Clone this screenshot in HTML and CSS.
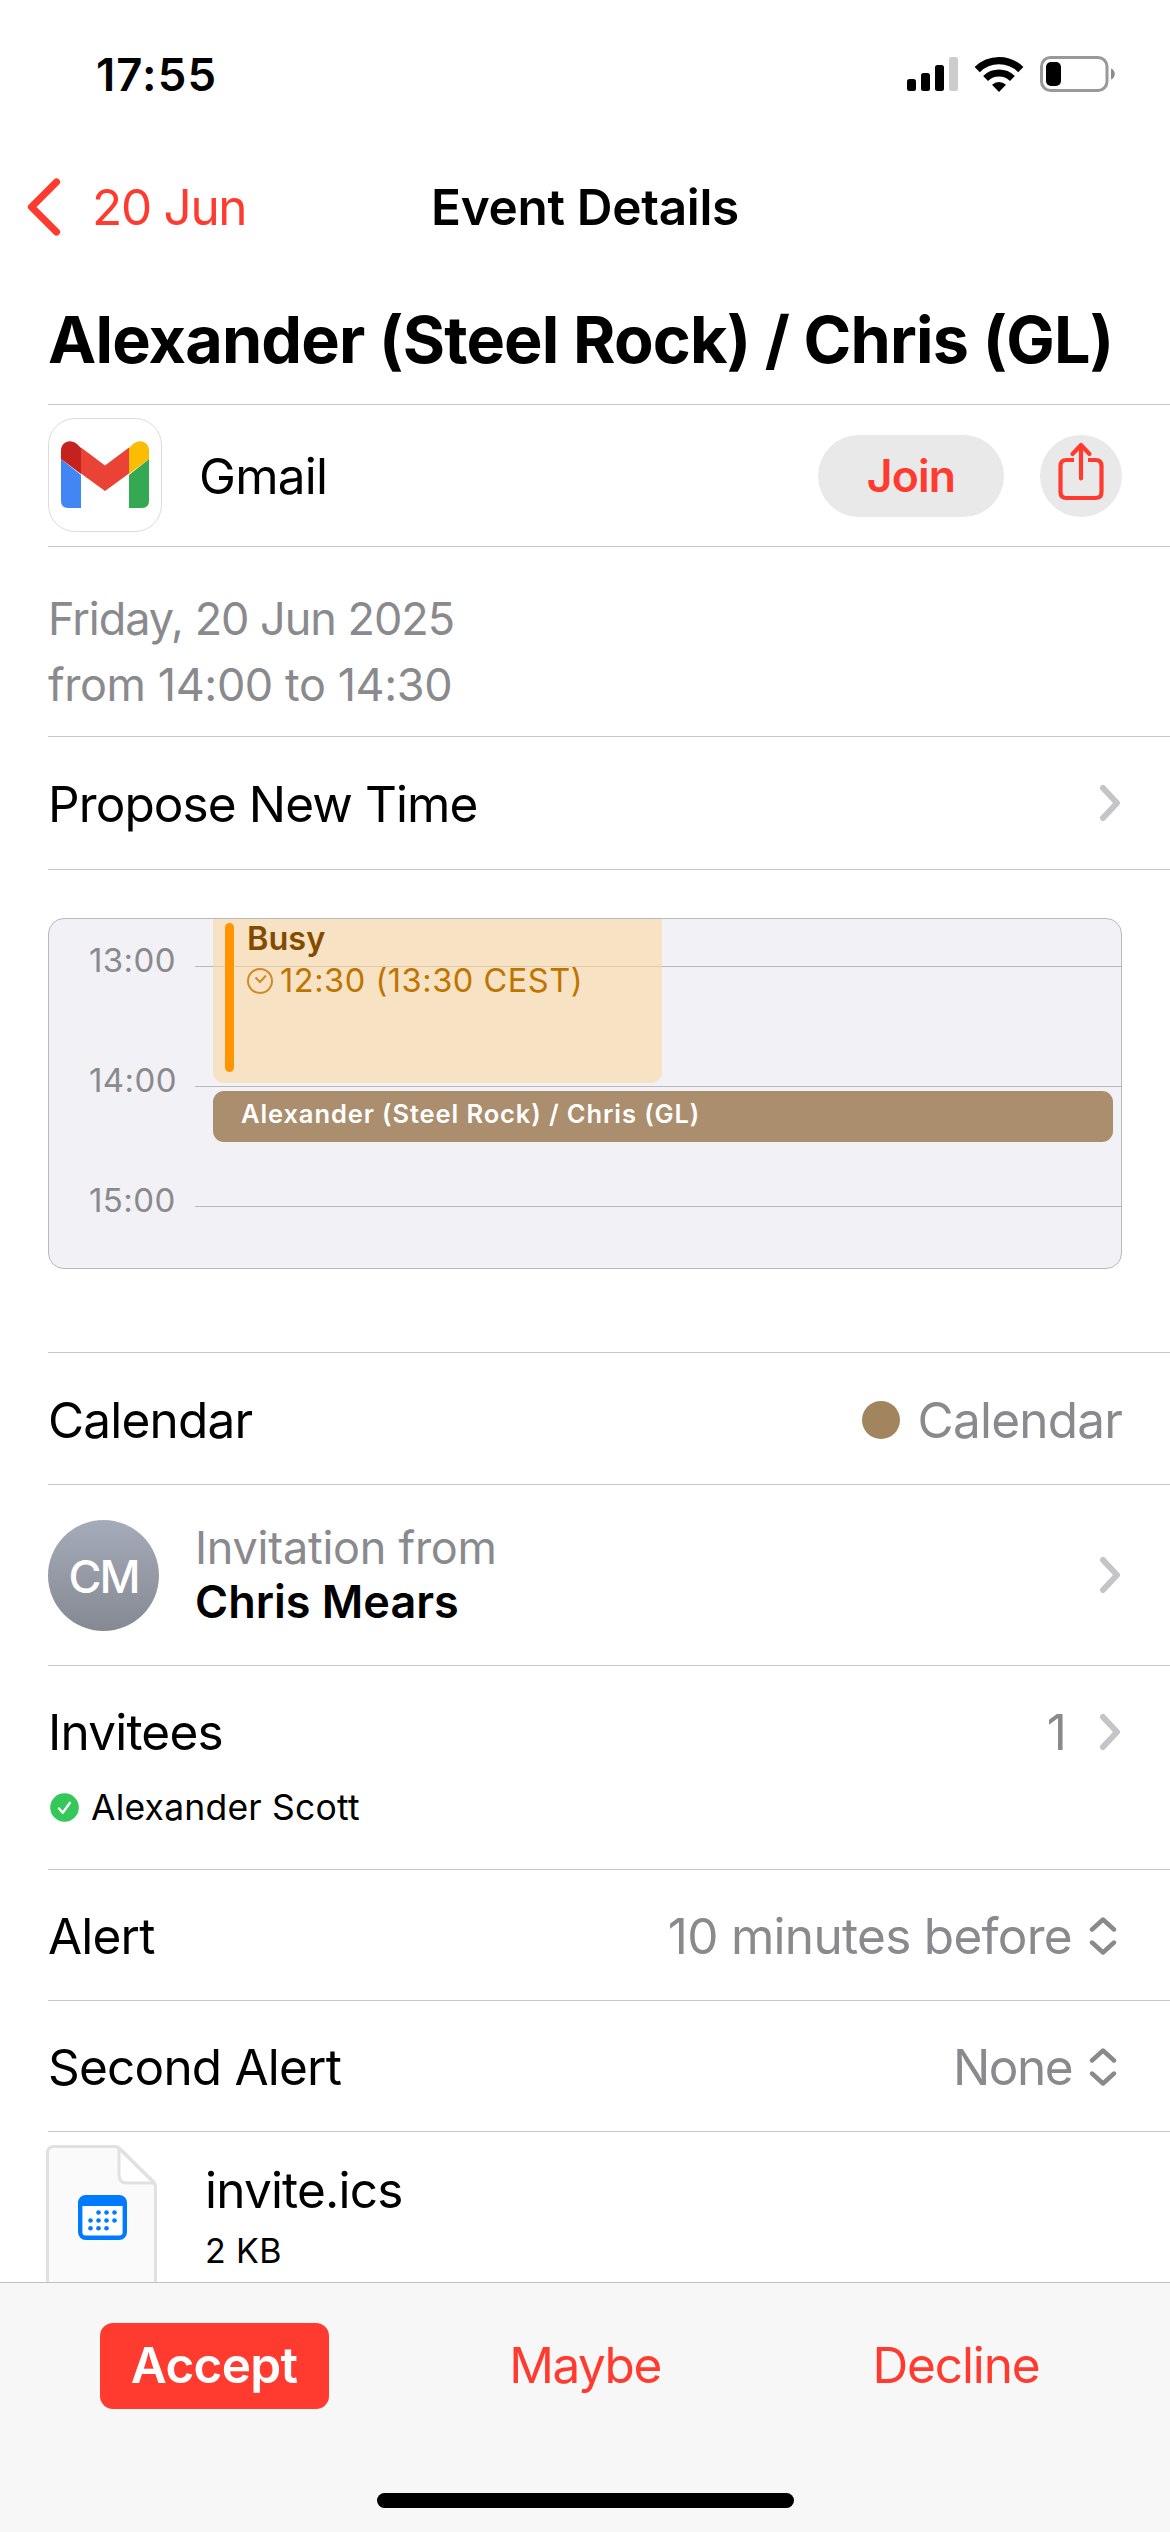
FILE: index.html
```html
<!DOCTYPE html>
<html lang="en">
<head>
<meta charset="utf-8">
<title>Event Details</title>
<link rel="stylesheet" href="styles.css">
</head>
<body>
<div class="screen">
  <header class="status">
    <span class="status-time">17:55</span>
    <div class="status-icons">
      <svg class="signal" width="52" height="36" viewBox="0 0 52 36">
        <rect x="0" y="23" width="9" height="12" rx="2.5"/>
        <rect x="14" y="17" width="9" height="18" rx="2.5"/>
        <rect x="28" y="9" width="9" height="26" rx="2.5"/>
        <rect x="42" y="1" width="9" height="34" rx="2.5" fill="#ccc"/>
      </svg>
      <svg class="wifi" width="50" height="36" viewBox="0 0 50 36">
        <path d="M3.2 13.6a31 31 0 0 1 43.6 0" fill="none" stroke="#000" stroke-width="7.4"/>
        <path d="M11.6 22.4a19.2 19.2 0 0 1 26.8 0" fill="none" stroke="#000" stroke-width="7"/>
        <path d="M25 36l-7-7.2a10 10 0 0 1 14 0z"/>
      </svg>
      <svg class="battery" width="76" height="36" viewBox="0 0 76 36">
        <rect x="1.5" y="1.5" width="65.500" height="33" rx="9" fill="none" stroke="#999" stroke-width="3"/>
        <rect x="6" y="6" width="15" height="24" rx="5"/>
        <path d="M71 12.500c5 1.500 5 9.500 0 11z" fill="#8c8c8c"/>
      </svg>
    </div>
  </header>

  <nav class="nav">
    <a class="back">
      <svg width="34" height="58" viewBox="0 0 34 58"><path d="M29.500 4 4.500 29l25 25" fill="none" stroke="#ff3b30" stroke-width="7.200" stroke-linecap="round" stroke-linejoin="round"/></svg>
      <span>20 Jun</span>
    </a>
    <h1 class="nav-title">Event Details</h1>
  </nav>

  <main class="details">
    <section class="row row-title"><h2 class="title">Alexander (Steel Rock) / Chris (GL)</h2></section>

    <section class="row row-app">
      <div class="app-icon">
        <svg width="88" height="67" viewBox="0 0 88 67">
          <path d="M0 18l20 16v33H7q-7 0-7-7z" fill="#4285f4"/>
          <path d="M88 18L68 34v33h13q7 0 7-7z" fill="#34a853"/>
          <path d="M20 7v26L0 18V9.500C0 1 9-3 16 3z" fill="#c5221f"/>
          <path d="M68 7v26l20-15V9.500C88 1 79-3 72 3z" fill="#fbbc04"/>
          <path d="M20 6.500l24 18 24-18v26L44 50 20 32.500z" fill="#ea4335"/>
        </svg>
      </div>
      <span class="app-name">Gmail</span>
      <button class="join">Join</button>
      <button class="share">
        <svg width="46" height="60" viewBox="0 0 46 60" fill="none" stroke="#ff3b30" stroke-width="4.200" stroke-linecap="round" stroke-linejoin="round">
          <path d="M16 19H8.500Q2.500 19 2.500 25v26q0 6 6 6h29q6 0 6-6V25q0-6-6-6H30" stroke-linecap="butt"/>
          <path d="M23 37.500V4.500M14.500 13 23 4l8.500 9"/>
        </svg>
      </button>
    </section>

    <section class="row row-date">
      <p class="date-line date-day">Friday, 20 Jun 2025</p>
      <p class="date-line date-time">from 14:00 to 14:30</p>
    </section>

    <section class="row row-propose">
      <span class="propose">Propose New Time</span>
      <svg class="chevron" width="22" height="38" viewBox="0 0 22 38"><path d="M4 4l14 15L4 34"/></svg>
    </section>

    <section class="row row-timeline">
      <div class="timeline">
        <div class="hour"><span class="hour-label">13:00</span><i class="hour-line"></i></div>
        <div class="hour"><span class="hour-label">14:00</span><i class="hour-line"></i></div>
        <div class="hour"><span class="hour-label">15:00</span><i class="hour-line"></i></div>
        <div class="event event-busy">
          <i class="event-bar"></i>
          <div class="event-body">
            <b class="busy">Busy</b>
            <span class="busy-time">
              <svg width="26" height="26" viewBox="0 0 26 26" fill="none" stroke="#d08a28" stroke-width="2"><circle cx="13" cy="13" r="12"/><path d="M8.500 9.500 13 14l6-6.500"/></svg>
              <span>12:30 (13:30 CEST)</span>
            </span>
          </div>
        </div>
        <div class="event event-main">Alexander (Steel Rock) / Chris (GL)</div>
      </div>
    </section>

    <section class="row row-calendar">
      <span class="calendar-label">Calendar</span>
      <span class="value"><i class="dot"></i><span class="calendar-label">Calendar</span></span>
    </section>

    <section class="row row-organizer">
      <div class="avatar">CM</div>
      <div class="organizer">
        <span class="muted invitation">Invitation from</span>
        <b class="organizer-name">Chris Mears</b>
      </div>
      <svg class="chevron" width="22" height="38" viewBox="0 0 22 38"><path d="M4 4l14 15L4 34"/></svg>
    </section>

    <section class="row row-invitees">
      <div class="line">
        <span class="invitees">Invitees</span>
        <span class="value count">1</span>
        <svg class="chevron" width="22" height="38" viewBox="0 0 22 38"><path d="M4 4l14 15L4 34"/></svg>
      </div>
      <div class="invitee">
        <svg class="accepted" width="29" height="29" viewBox="0 0 29 29"><circle cx="14.500" cy="14.500" r="14.300" fill="#34c759"/><path d="M9 15.500l3.700 4.300L20 9.800" fill="none" stroke="#fff" stroke-width="2.400" stroke-linecap="round" stroke-linejoin="round"/></svg>
        <span class="invitee-name">Alexander Scott</span>
      </div>
    </section>

    <section class="row row-alert">
      <span class="alert-label">Alert</span>
      <span class="value minutes">10 minutes before</span>
      <svg class="updown" width="28" height="40" viewBox="0 0 28 40"><path d="M3 13.500 14 3.500l11 10M3 26.500l11 10 11-10"/></svg>
    </section>

    <section class="row row-alert">
      <span class="alert-label">Second Alert</span>
      <span class="value none">None</span>
      <svg class="updown" width="28" height="40" viewBox="0 0 28 40"><path d="M3 13.500 14 3.500l11 10M3 26.500l11 10 11-10"/></svg>
    </section>

    <section class="row-file">
      <svg class="file-icon" width="112" height="150" viewBox="0 0 112 150">
        <path d="M1.500 150V8q0-6.500 6.500-6.500h60q4 0 7 3L106 35q3.500 3 3.500 7V150" fill="#fafafa" stroke="#e1e1e1" stroke-width="3"/>
        <path d="M73 3.500 108 38H81q-8 0-8-8z" fill="#fff" stroke="#e1e1e1" stroke-width="3" stroke-linejoin="round"/>
        <rect x="34.200" y="52.200" width="44.600" height="40.600" rx="5.500" fill="#fff" stroke="#007aff" stroke-width="4.400"/>
        <path d="M33 61v-4q0-6 6-6h35q6 0 6 6v4z" fill="#007aff"/>
        <g fill="#007aff">
          <circle cx="52.500" cy="67.500" r="2.300"/><circle cx="60.500" cy="67.500" r="2.300"/><circle cx="68.500" cy="67.500" r="2.300"/>
          <circle cx="44.500" cy="75.500" r="2.300"/><circle cx="52.500" cy="75.500" r="2.300"/><circle cx="60.500" cy="75.500" r="2.300"/><circle cx="68.500" cy="75.500" r="2.300"/>
          <circle cx="44.500" cy="83.200" r="2.300"/><circle cx="52.500" cy="83.200" r="2.300"/><circle cx="60.500" cy="83.200" r="2.300"/>
        </g>
      </svg>
      <div class="file-text">
        <span class="file-name">invite.ics</span>
        <span class="file-size">2 KB</span>
      </div>
    </section>
  </main>

  <footer class="toolbar">
    <div class="actions">
      <button class="action accept">Accept</button>
      <button class="action maybe">Maybe</button>
      <button class="action decline">Decline</button>
    </div>
    <div class="home"></div>
  </footer>
</div>
</body>
</html>
```
FILE: styles.css
```css
* { box-sizing: border-box; margin: 0; padding: 0; }

body {
  background: #fff;
  color: #000;
  font-family: Inter, "Liberation Sans", sans-serif;
  font-size: 49.5px;
  line-height: 60px;
  letter-spacing: -0.8px;
  white-space: nowrap;
}

button { border: 0; font: inherit; letter-spacing: inherit; color: #ff3b30; }
svg { display: block; flex: none; }

.screen {
  display: flex;
  flex-direction: column;
  width: 1170px;
  height: 2532px;
  overflow: hidden;
}

/* Status bar */
.status {
  display: flex;
  justify-content: space-between;
  align-items: center;
  height: 150px;
  padding: 0 54px 0 96px;
}
.status-time { font-size: 45.5px; font-weight: 600; letter-spacing: 1.1px; }
.status-icons { display: flex; align-items: center; padding-bottom: 2px; }
.wifi { margin-left: 15px; }
.battery { margin-left: 16px; }

/* Navigation bar */
.nav {
  display: grid;
  grid-template-columns: 1fr auto 1fr;
  align-items: center;
  height: 114px;
  padding: 0 27px;
}
.back { display: flex; align-items: center; gap: 31px; letter-spacing: -1.3px; color: #ff3b30; }
.nav-title { font-size: 49.5px; font-weight: 600; letter-spacing: -0.3px; }

/* Rows */
.details { flex: 1; min-height: 0; overflow: hidden; padding-left: 48px; }
.row {
  display: flex;
  align-items: center;
  padding-right: 48px;
  border-bottom: 1px solid #c6c6c8;
}
.value { display: flex; align-items: center; margin-left: auto; color: #8a8a8e; }
.muted { color: #8a8a8e; }
.chevron { margin: 0 1px 0 auto; fill: none; stroke: #c5c5c7; stroke-width: 6; stroke-linecap: round; stroke-linejoin: round; }
.updown { margin: 0 5px 0 17px; fill: none; stroke: #8a8a8e; stroke-width: 4.4; stroke-linecap: round; stroke-linejoin: round; }

.row-title { height: 141px; padding-top: 11px; }
.title { font-size: 64.7px; line-height: 80px; font-weight: 700; letter-spacing: -0.82px; }

.row-app { height: 142px; }
.app-icon {
  display: flex;
  align-items: center;
  justify-content: center;
  width: 114px;
  height: 114px;
  margin-bottom: 1px;
  padding-bottom: 2px;
  border: 1px solid #dcdcdc;
  border-radius: 27px;
}
.app-name { margin: 0 auto 0 37px; }
.join {
  width: 186px;
  height: 82px;
  border-radius: 41px;
  background: #e9e9e9;
  font-size: 44.5px;
  font-weight: 600;
}
.share {
  display: flex;
  justify-content: center;
  width: 82px;
  height: 82px;
  margin-left: 36px;
  padding-top: 6px;
  border-radius: 50%;
  background: #e9e9e9;
}

.row-date { flex-direction: column; align-items: flex-start; height: 190px; padding-top: 39px; }
.date-line { font-size: 45px; line-height: 66px; color: #8a8a8e; }
.date-day { letter-spacing: -1.03px; }
.date-time { letter-spacing: -0.42px; }

.row-propose { height: 133px; }
.propose { padding-top: 1px; letter-spacing: -0.9px; }

/* Day timeline */
.row-timeline { align-items: flex-start; height: 483px; padding-top: 48px; }
.timeline {
  position: relative;
  width: 1074px;
  height: 351px;
  overflow: hidden;
  border: 1px solid #b9b9bd;
  border-radius: 16px;
  background: #f2f1f6;
  letter-spacing: 0.4px;
}
.hour { display: flex; align-items: center; height: 120px; }
.hour:first-child { margin-top: -19px; }
.hour-label { width: 146px; padding-left: 40px; font-size: 33px; color: #8a8a8e; }
.hour-line { flex: 1; height: 1px; margin-top: 13px; background: #b9b9bd; }
.event { position: absolute; left: 164px; }
.event-busy {
  display: flex;
  top: 0;
  width: 449px;
  height: 164px;
  padding: 4px 12px 11px;
  border-radius: 0 0 11px 11px;
  background: rgba(254, 215, 158, 0.57);
}
.event-bar { width: 9px; border-radius: 5px; background: #ff9500; }
.event-body { margin-left: 13px; }
.busy { display: block; height: 42px; margin-top: -5px; font-size: 32.5px; line-height: 42px; font-weight: 600; letter-spacing: 0; color: #844b00; }
.busy-time { display: flex; align-items: center; gap: 7px; height: 42px; font-size: 32.5px; line-height: 42px; letter-spacing: 0.55px; color: #c07400; }
.event-main {
  top: 172px;
  width: 900px;
  height: 51px;
  padding-left: 28px;
  border-radius: 11px;
  background: #ab8e6d;
  font-size: 25.5px;
  line-height: 46px;
  font-weight: 600;
  letter-spacing: 0.9px;
  color: #fff;
}

.row-calendar { height: 132px; padding-top: 2px; }
.dot { width: 38px; height: 38px; margin-right: 18px; border-radius: 50%; background: #a2845e; }

.row-organizer { height: 181px; }
.avatar {
  width: 111px;
  height: 111px;
  border-radius: 50%;
  background: linear-gradient(#a5abb9, #858992);
  font-size: 45px;
  font-weight: 500;
  line-height: 113px;
  letter-spacing: -2px;
  text-align: center;
  color: #fff;
}
.organizer { display: flex; flex-direction: column; margin-left: 36px; font-size: 45px; line-height: 54px; letter-spacing: 0; }
.invitation { letter-spacing: -0.25px; }
.organizer-name { font-weight: 600; }

.row-invitees { display: block; height: 204px; padding-top: 36px; }
.line { display: flex; align-items: center; height: 60px; }
.line .chevron { margin-left: 33px; }
.invitee { display: flex; align-items: center; height: 44px; margin: 24px 0 0 2px; font-size: 35.5px; letter-spacing: 0.2px; }
.accepted { margin-bottom: 2px; }
.invitee-name { margin-left: 12px; }

.row-alert { height: 131px; padding-top: 1px; }
.minutes { letter-spacing: -0.7px; }
.none { letter-spacing: -1.5px; }

.row-file { display: flex; height: 150px; padding-top: 13px; }
.file-icon { margin-left: -2px; }
.file-text { display: flex; flex-direction: column; margin-left: 47px; }
.file-name { height: 60px; margin-top: 15px; }
.file-size { height: 44px; margin-top: 9px; font-size: 34px; line-height: 44px; letter-spacing: 0.4px; }

/* Response toolbar */
.toolbar { height: 250px; border-top: 1px solid #c1c1c1; background: #f7f7f7; }
.actions { display: grid; grid-template-columns: repeat(3, 371px); justify-content: center; justify-items: center; padding-top: 40px; }
.action { height: 86px; padding-bottom: 2px; background: none; }
.action.accept { width: 229px; border-radius: 13px; background: #ff3b30; font-weight: 600; letter-spacing: -0.7px; color: #fff; }
.maybe { letter-spacing: -1.5px; }
.decline { letter-spacing: -1.1px; }
.home { width: 417px; height: 15px; margin: 84px auto 0; border-radius: 8px; background: #000; }
```
